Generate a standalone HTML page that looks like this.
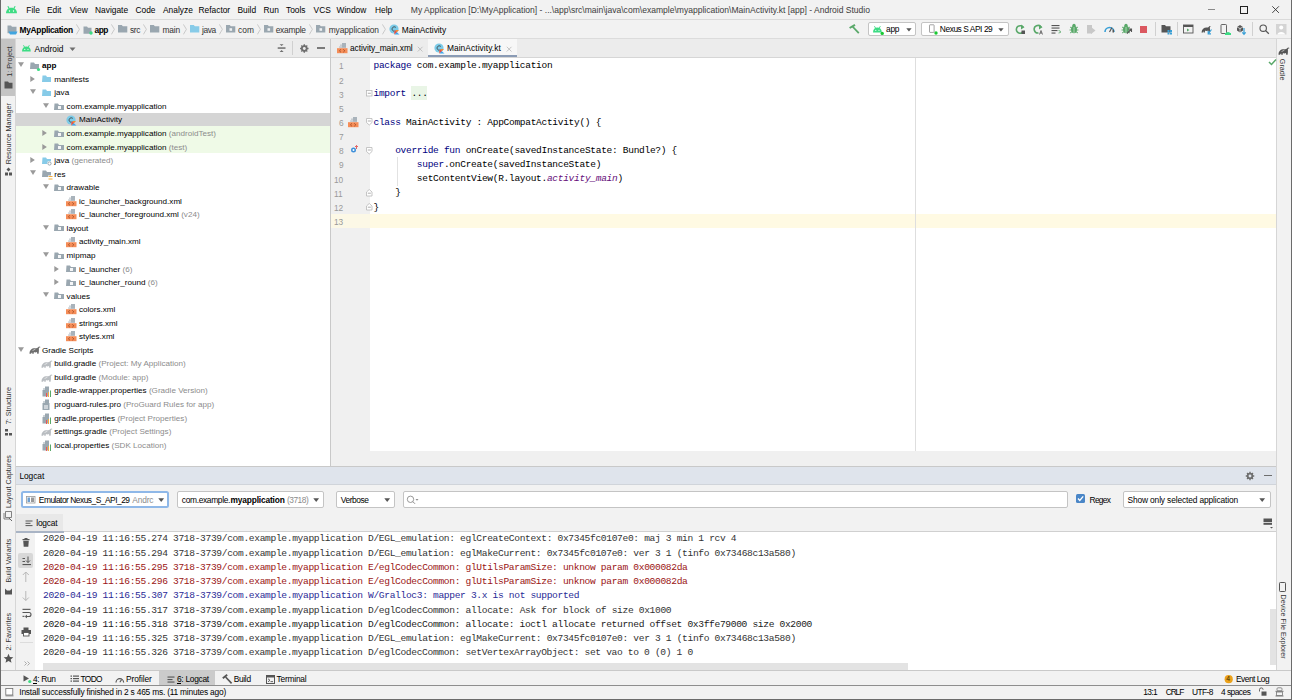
<!DOCTYPE html>
<html><head><meta charset="utf-8"><style>
html,body{margin:0;padding:0;width:1292px;height:700px;overflow:hidden;background:#f2f2f2;}
body{position:relative;font-family:"Liberation Sans", sans-serif;}
body>div,body>svg{position:absolute;}
.t{line-height:0;white-space:pre;}
</style></head><body>
<div style="left:0px;top:0px;width:1292px;height:19px;background:#f2f2f2;"></div>
<div style="left:0px;top:19px;width:1292px;height:1px;background:#dadada;"></div>
<div style="left:0px;top:20px;width:1292px;height:18px;background:#f2f2f2;"></div>
<div style="left:0px;top:38px;width:1292px;height:1px;background:#dcdcdc;"></div>
<div style="left:1px;top:39px;width:14px;height:632px;background:#f2f2f2;"></div>
<div style="left:15px;top:39px;width:1px;height:632px;background:#d6d6d6;"></div>
<div style="left:1px;top:39px;width:14px;height:57px;background:#c4c4c4;"></div>
<div style="left:16px;top:39px;width:314px;height:18px;background:#ececec;"></div>
<div style="left:16px;top:57px;width:314px;height:1px;background:#d6d6d6;"></div>
<div style="left:16px;top:58px;width:314px;height:408px;background:#ffffff;"></div>
<div style="left:16px;top:112.5px;width:314px;height:13.5px;background:#d5d5d5;"></div>
<div style="left:16px;top:126px;width:314px;height:27px;background:#effae7;"></div>
<div style="left:330px;top:39px;width:1px;height:427px;background:#c9c9c9;"></div>
<div style="left:331px;top:39px;width:945px;height:18px;background:#ececec;"></div>
<div style="left:331px;top:57px;width:945px;height:1px;background:#d6d6d6;"></div>
<div style="left:428px;top:39px;width:89px;height:18px;background:#f7f7f7;"></div>
<div style="left:428px;top:55px;width:89px;height:2px;background:#8a9bb5;"></div>
<div style="left:331px;top:58px;width:39px;height:393px;background:#f0f0f0;"></div>
<div style="left:370px;top:58px;width:906px;height:393px;background:#ffffff;"></div>
<div style="left:331px;top:214px;width:945px;height:14.2px;background:#fcf8e6;"></div>
<div style="left:370px;top:214px;width:906px;height:14.2px;background:#fffae3;"></div>
<div style="left:915px;top:58px;width:1px;height:393px;background:#dedede;"></div>
<div style="left:331px;top:451px;width:945px;height:15px;background:#f0f0f0;"></div>
<div style="left:1276px;top:39px;width:1px;height:632px;background:#d6d6d6;"></div>
<div style="left:1277px;top:39px;width:14px;height:632px;background:#f2f2f2;"></div>
<div style="left:16px;top:466px;width:1260px;height:1px;background:#c9c9c9;"></div>
<div style="left:16px;top:467px;width:1260px;height:17px;background:#dfe4ec;"></div>
<div style="left:16px;top:484px;width:1260px;height:1px;background:#d0d4da;"></div>
<div style="left:16px;top:485px;width:1260px;height:28px;background:#f2f2f2;"></div>
<div style="left:16px;top:514px;width:1260px;height:17px;background:#f2f2f2;"></div>
<div style="left:16px;top:531px;width:1260px;height:1px;background:#d0d0d0;"></div>
<div style="left:16px;top:532px;width:19px;height:138px;background:#f2f2f2;"></div>
<div style="left:35px;top:532px;width:1241px;height:138px;background:#ffffff;"></div>
<div style="left:0px;top:670px;width:1292px;height:1px;background:#c9c9c9;"></div>
<div style="left:1px;top:671px;width:1290px;height:14px;background:#f2f2f2;"></div>
<div style="left:0px;top:685px;width:1292px;height:1px;background:#8e8e8e;"></div>
<div style="left:1px;top:686px;width:1290px;height:13px;background:#f2f2f2;"></div>
<div style="left:0px;top:0px;width:1px;height:700px;background:#6b6b6b;"></div>
<div style="left:1291px;top:0px;width:1px;height:700px;background:#6b6b6b;"></div>
<div style="left:0px;top:699px;width:1292px;height:1px;background:#6b6b6b;"></div>
<div class="t" style="left:26.3px;top:9.79px;font-size:8.4px;color:#000;font-weight:normal;font-family:'Liberation Sans', sans-serif;">File</div>
<div class="t" style="left:47px;top:9.79px;font-size:8.4px;color:#000;font-weight:normal;font-family:'Liberation Sans', sans-serif;">Edit</div>
<div class="t" style="left:69.7px;top:9.79px;font-size:8.4px;color:#000;font-weight:normal;font-family:'Liberation Sans', sans-serif;">View</div>
<div class="t" style="left:95px;top:9.79px;font-size:8.4px;color:#000;font-weight:normal;font-family:'Liberation Sans', sans-serif;">Navigate</div>
<div class="t" style="left:135.5px;top:9.79px;font-size:8.4px;color:#000;font-weight:normal;font-family:'Liberation Sans', sans-serif;">Code</div>
<div class="t" style="left:163px;top:9.79px;font-size:8.4px;color:#000;font-weight:normal;font-family:'Liberation Sans', sans-serif;">Analyze</div>
<div class="t" style="left:198.5px;top:9.79px;font-size:8.4px;color:#000;font-weight:normal;font-family:'Liberation Sans', sans-serif;">Refactor</div>
<div class="t" style="left:237.5px;top:9.79px;font-size:8.4px;color:#000;font-weight:normal;font-family:'Liberation Sans', sans-serif;">Build</div>
<div class="t" style="left:263.5px;top:9.79px;font-size:8.4px;color:#000;font-weight:normal;font-family:'Liberation Sans', sans-serif;">Run</div>
<div class="t" style="left:286px;top:9.79px;font-size:8.4px;color:#000;font-weight:normal;font-family:'Liberation Sans', sans-serif;">Tools</div>
<div class="t" style="left:313.6px;top:9.79px;font-size:8.4px;color:#000;font-weight:normal;font-family:'Liberation Sans', sans-serif;">VCS</div>
<div class="t" style="left:336.5px;top:9.79px;font-size:8.4px;color:#000;font-weight:normal;font-family:'Liberation Sans', sans-serif;">Window</div>
<div class="t" style="left:375px;top:9.79px;font-size:8.4px;color:#000;font-weight:normal;font-family:'Liberation Sans', sans-serif;">Help</div>
<div class="t" style="left:410.8px;top:9.74px;font-size:8.55px;color:#3c3c3c;font-weight:normal;font-family:'Liberation Sans', sans-serif;">My Application [D:\MyApplication] - ...\app\src\main\java\com\example\myapplication\MainActivity.kt [app] - Android Studio</div>
<div class="t" style="left:339.0px;top:66.42px;font-size:8.3px;color:#999999;font-weight:normal;font-family:'Liberation Sans', sans-serif;">1</div>
<div class="t" style="left:339.0px;top:80.57px;font-size:8.3px;color:#999999;font-weight:normal;font-family:'Liberation Sans', sans-serif;">2</div>
<div class="t" style="left:339.0px;top:94.72px;font-size:8.3px;color:#999999;font-weight:normal;font-family:'Liberation Sans', sans-serif;">3</div>
<div class="t" style="left:339.0px;top:108.87px;font-size:8.3px;color:#999999;font-weight:normal;font-family:'Liberation Sans', sans-serif;">5</div>
<div class="t" style="left:339.0px;top:123.02px;font-size:8.3px;color:#999999;font-weight:normal;font-family:'Liberation Sans', sans-serif;">6</div>
<div class="t" style="left:339.0px;top:137.17px;font-size:8.3px;color:#999999;font-weight:normal;font-family:'Liberation Sans', sans-serif;">7</div>
<div class="t" style="left:339.0px;top:151.32px;font-size:8.3px;color:#999999;font-weight:normal;font-family:'Liberation Sans', sans-serif;">8</div>
<div class="t" style="left:339.0px;top:165.47px;font-size:8.3px;color:#999999;font-weight:normal;font-family:'Liberation Sans', sans-serif;">9</div>
<div class="t" style="left:334.0px;top:179.62px;font-size:8.3px;color:#999999;font-weight:normal;font-family:'Liberation Sans', sans-serif;">10</div>
<div class="t" style="left:334.0px;top:193.77px;font-size:8.3px;color:#999999;font-weight:normal;font-family:'Liberation Sans', sans-serif;">11</div>
<div class="t" style="left:334.0px;top:207.92px;font-size:8.3px;color:#999999;font-weight:normal;font-family:'Liberation Sans', sans-serif;">12</div>
<div class="t" style="left:334.0px;top:222.07px;font-size:8.3px;color:#999999;font-weight:normal;font-family:'Liberation Sans', sans-serif;">13</div>
<div class="t" style="left:373.5px;top:66.01px;font-size:9.5px;color:#000080;font-weight:normal;font-family:'Liberation Mono', monospace;letter-spacing:-0.281px;">package</div>
<div class="t" style="left:411.44px;top:66.01px;font-size:9.5px;color:#000;font-weight:normal;font-family:'Liberation Mono', monospace;letter-spacing:-0.281px;"> com.example.myapplication</div>
<div style="left:411px;top:86px;width:16px;height:14px;background:#e9f5e6;"></div>
<div class="t" style="left:373.5px;top:94.31px;font-size:9.5px;color:#000080;font-weight:normal;font-family:'Liberation Mono', monospace;letter-spacing:-0.281px;">import</div>
<div class="t" style="left:406.02px;top:94.31px;font-size:9.5px;color:#000;font-weight:normal;font-family:'Liberation Mono', monospace;letter-spacing:-0.281px;"> ...</div>
<div class="t" style="left:373.5px;top:122.61px;font-size:9.5px;color:#000080;font-weight:normal;font-family:'Liberation Mono', monospace;letter-spacing:-0.281px;">class</div>
<div class="t" style="left:400.6px;top:122.61px;font-size:9.5px;color:#000;font-weight:normal;font-family:'Liberation Mono', monospace;letter-spacing:-0.281px;"> MainActivity : AppCompatActivity() {</div>
<div class="t" style="left:395.18px;top:150.91px;font-size:9.5px;color:#000080;font-weight:normal;font-family:'Liberation Mono', monospace;letter-spacing:-0.281px;">override</div>
<div class="t" style="left:443.96000000000004px;top:150.91px;font-size:9.5px;color:#000080;font-weight:normal;font-family:'Liberation Mono', monospace;letter-spacing:-0.281px;">fun</div>
<div class="t" style="left:460.22px;top:150.91px;font-size:9.5px;color:#000;font-weight:normal;font-family:'Liberation Mono', monospace;letter-spacing:-0.281px;"> onCreate(savedInstanceState: Bundle?) {</div>
<div class="t" style="left:416.86px;top:165.06px;font-size:9.5px;color:#000080;font-weight:normal;font-family:'Liberation Mono', monospace;letter-spacing:-0.281px;">super</div>
<div class="t" style="left:443.96000000000004px;top:165.06px;font-size:9.5px;color:#000;font-weight:normal;font-family:'Liberation Mono', monospace;letter-spacing:-0.281px;">.onCreate(savedInstanceState)</div>
<div class="t" style="left:373.5px;top:179.21px;font-size:9.5px;color:#000;font-weight:normal;font-family:'Liberation Mono', monospace;letter-spacing:-0.281px;">        setContentView(R.layout.</div>
<div class="t" style="left:546.94px;top:179.21px;font-size:9.5px;color:#660e7a;font-weight:normal;font-family:'Liberation Mono', monospace;letter-spacing:-0.281px;font-style:italic;">activity_main</div>
<div class="t" style="left:617.4000000000001px;top:179.21px;font-size:9.5px;color:#000;font-weight:normal;font-family:'Liberation Mono', monospace;">)</div>
<div class="t" style="left:373.5px;top:193.36px;font-size:9.5px;color:#000;font-weight:normal;font-family:'Liberation Mono', monospace;letter-spacing:-0.281px;">    }</div>
<div class="t" style="left:373.5px;top:207.51px;font-size:9.5px;color:#000;font-weight:normal;font-family:'Liberation Mono', monospace;">}</div>
<svg style="left:18.0px;top:62.08px" width="7" height="6" viewBox="0 0 7 6"><path d="M0,0.3 h6 l-3,4.6 z" fill="#9a9a9a"/></svg>
<svg style="left:29.5px;top:61.879999999999995px" width="12" height="10" viewBox="0 0 12 10"><path d="M0.5,0.5 h3.5 l1,1.5 h4 v5 h-9 z" fill="#9aa7b0"/><circle cx="8.5" cy="7.5" r="1.6" fill="#3ddc84"/></svg>
<div class="t" style="left:42.0px;top:66.27px;font-size:8.1px;color:#000;font-weight:bold;font-family:'Liberation Sans', sans-serif;">app</div>
<svg style="left:29.8px;top:75.83px" width="6" height="7" viewBox="0 0 6 7"><path d="M0.3,0 v6 l4.6,-3 z" fill="#9a9a9a"/></svg>
<svg style="left:41.8px;top:75.42999999999999px" width="12" height="10" viewBox="0 0 12 10"><path d="M0.5,0.5 h3.5 l1,1.5 h4 v5 h-9 z" fill="#87cbe8"/></svg>
<div class="t" style="left:54.3px;top:79.82px;font-size:8.1px;color:#000;font-weight:normal;font-family:'Liberation Sans', sans-serif;">manifests</div>
<svg style="left:30.3px;top:89.17999999999999px" width="7" height="6" viewBox="0 0 7 6"><path d="M0,0.3 h6 l-3,4.6 z" fill="#9a9a9a"/></svg>
<svg style="left:41.8px;top:88.97999999999999px" width="12" height="10" viewBox="0 0 12 10"><path d="M0.5,0.5 h3.5 l1,1.5 h4 v5 h-9 z" fill="#87cbe8"/></svg>
<div class="t" style="left:54.3px;top:93.37px;font-size:8.1px;color:#000;font-weight:normal;font-family:'Liberation Sans', sans-serif;">java</div>
<svg style="left:42.6px;top:102.73px" width="7" height="6" viewBox="0 0 7 6"><path d="M0,0.3 h6 l-3,4.6 z" fill="#9a9a9a"/></svg>
<svg style="left:54.1px;top:102.53px" width="13" height="10" viewBox="0 0 13 10"><path d="M0.5,0.5 h3.5 l1,1.5 h5 v5 h-10 z" fill="#9aa7b0"/><rect x="4" y="3" width="3" height="3" fill="#fff" opacity="0.9"/></svg>
<div class="t" style="left:66.6px;top:106.92px;font-size:8.1px;color:#000;font-weight:normal;font-family:'Liberation Sans', sans-serif;">com.example.myapplication</div>
<svg style="left:65.9px;top:115.08px" width="11" height="11" viewBox="0 0 11 11"><circle cx="5" cy="5" r="4.6" fill="#7ccbe8"/><path d="M6.8,3.4 A2.2,2.2 0 1 0 5.6,7.2" stroke="#333" stroke-width="1" fill="none" opacity="0.8"/><path d="M5.5,10.5 L5.5,6 L10,6 Z" fill="#f88a2f"/><path d="M5.5,10.5 L5.5,6 L7.8,8.2 Z" fill="#e44857"/><path d="M5.5,10.5 L7.8,8.2 L10.5,10.5 Z" fill="#3aa8f0"/><path d="M5.5,6 L6.8,6 L5.5,7.5 Z" fill="#3aa8f0"/></svg>
<div class="t" style="left:78.9px;top:120.47px;font-size:8.1px;color:#000;font-weight:normal;font-family:'Liberation Sans', sans-serif;">MainActivity</div>
<svg style="left:42.1px;top:130.03px" width="6" height="7" viewBox="0 0 6 7"><path d="M0.3,0 v6 l4.6,-3 z" fill="#9a9a9a"/></svg>
<svg style="left:54.1px;top:129.63px" width="13" height="10" viewBox="0 0 13 10"><path d="M0.5,0.5 h3.5 l1,1.5 h5 v5 h-10 z" fill="#9aa7b0"/><rect x="4" y="3" width="3" height="3" fill="#fff" opacity="0.9"/></svg>
<div class="t" style="left:66.6px;top:134.02px;font-size:8.1px;color:#000;font-weight:normal;font-family:'Liberation Sans', sans-serif;">com.example.myapplication</div>
<div class="t" style="left:168.83881250000002px;top:134.02px;font-size:8.1px;color:#8c8c8c;font-weight:normal;font-family:'Liberation Sans', sans-serif;">(androidTest)</div>
<svg style="left:42.1px;top:143.58px" width="6" height="7" viewBox="0 0 6 7"><path d="M0.3,0 v6 l4.6,-3 z" fill="#9a9a9a"/></svg>
<svg style="left:54.1px;top:143.18px" width="13" height="10" viewBox="0 0 13 10"><path d="M0.5,0.5 h3.5 l1,1.5 h5 v5 h-10 z" fill="#9aa7b0"/><rect x="4" y="3" width="3" height="3" fill="#fff" opacity="0.9"/></svg>
<div class="t" style="left:66.6px;top:147.57px;font-size:8.1px;color:#000;font-weight:normal;font-family:'Liberation Sans', sans-serif;">com.example.myapplication</div>
<div class="t" style="left:168.83881250000002px;top:147.57px;font-size:8.1px;color:#8c8c8c;font-weight:normal;font-family:'Liberation Sans', sans-serif;">(test)</div>
<svg style="left:29.8px;top:157.13000000000002px" width="6" height="7" viewBox="0 0 6 7"><path d="M0.3,0 v6 l4.6,-3 z" fill="#9a9a9a"/></svg>
<svg style="left:41.8px;top:156.73000000000002px" width="12" height="10" viewBox="0 0 12 10"><path d="M0.5,0.5 h3.5 l1,1.5 h4 v5 h-9 z" fill="#87cbe8"/><circle cx="7.5" cy="6.5" r="2.4" fill="#fff"/><circle cx="7.5" cy="6.5" r="1.6" fill="none" stroke="#9aa7b0" stroke-width="1"/></svg>
<div class="t" style="left:54.3px;top:161.12px;font-size:8.1px;color:#000;font-weight:normal;font-family:'Liberation Sans', sans-serif;">java</div>
<div class="t" style="left:71.45843749999999px;top:161.12px;font-size:8.1px;color:#8c8c8c;font-weight:normal;font-family:'Liberation Sans', sans-serif;">(generated)</div>
<svg style="left:30.3px;top:170.48000000000002px" width="7" height="6" viewBox="0 0 7 6"><path d="M0,0.3 h6 l-3,4.6 z" fill="#9a9a9a"/></svg>
<svg style="left:41.8px;top:170.28px" width="12" height="10" viewBox="0 0 12 10"><path d="M0.5,0.5 h3.5 l1,1.5 h4 v5 h-9 z" fill="#9aa7b0"/><rect x="6" y="5.5" width="5" height="4.5" fill="#fff"/><rect x="6.5" y="6" width="4" height="1" fill="#f4af3d"/><rect x="6.5" y="8.5" width="4" height="1" fill="#f4af3d"/></svg>
<div class="t" style="left:54.3px;top:174.67px;font-size:8.1px;color:#000;font-weight:normal;font-family:'Liberation Sans', sans-serif;">res</div>
<svg style="left:42.6px;top:184.03px" width="7" height="6" viewBox="0 0 7 6"><path d="M0,0.3 h6 l-3,4.6 z" fill="#9a9a9a"/></svg>
<svg style="left:54.1px;top:183.82999999999998px" width="13" height="10" viewBox="0 0 13 10"><path d="M0.5,0.5 h3.5 l1,1.5 h5 v5 h-10 z" fill="#9aa7b0"/><rect x="4" y="3" width="3" height="3" fill="#fff" opacity="0.9"/></svg>
<div class="t" style="left:66.6px;top:188.22px;font-size:8.1px;color:#000;font-weight:normal;font-family:'Liberation Sans', sans-serif;">drawable</div>
<svg style="left:65.9px;top:195.88px" width="11" height="11" viewBox="0 0 11 11"><rect x="5" y="0" width="4" height="4.6" fill="#a9b3bb"/><rect x="3.2" y="1.6" width="1.6" height="1.1" fill="#a9b3bb"/><rect x="2.2" y="3.5" width="6.8" height="1.1" fill="#a9b3bb"/><rect x="0" y="5.2" width="10.5" height="5" fill="#f58d58"/><path d="M4,6.3 l-1.6,1.5 l1.6,1.5 M6.2,6.3 l1.6,1.5 l-1.6,1.5" stroke="#8a3a18" stroke-width="0.75" fill="none" opacity="0.85"/></svg>
<div class="t" style="left:78.9px;top:201.77px;font-size:8.1px;color:#000;font-weight:normal;font-family:'Liberation Sans', sans-serif;">ic_launcher_background.xml</div>
<svg style="left:65.9px;top:209.43px" width="11" height="11" viewBox="0 0 11 11"><rect x="5" y="0" width="4" height="4.6" fill="#a9b3bb"/><rect x="3.2" y="1.6" width="1.6" height="1.1" fill="#a9b3bb"/><rect x="2.2" y="3.5" width="6.8" height="1.1" fill="#a9b3bb"/><rect x="0" y="5.2" width="10.5" height="5" fill="#f58d58"/><path d="M4,6.3 l-1.6,1.5 l1.6,1.5 M6.2,6.3 l1.6,1.5 l-1.6,1.5" stroke="#8a3a18" stroke-width="0.75" fill="none" opacity="0.85"/></svg>
<div class="t" style="left:78.9px;top:215.32px;font-size:8.1px;color:#000;font-weight:normal;font-family:'Liberation Sans', sans-serif;">ic_launcher_foreground.xml</div>
<div class="t" style="left:181.14893750000002px;top:215.32px;font-size:8.1px;color:#8c8c8c;font-weight:normal;font-family:'Liberation Sans', sans-serif;">(v24)</div>
<svg style="left:42.6px;top:224.68000000000004px" width="7" height="6" viewBox="0 0 7 6"><path d="M0,0.3 h6 l-3,4.6 z" fill="#9a9a9a"/></svg>
<svg style="left:54.1px;top:224.48000000000002px" width="13" height="10" viewBox="0 0 13 10"><path d="M0.5,0.5 h3.5 l1,1.5 h5 v5 h-10 z" fill="#9aa7b0"/><rect x="4" y="3" width="3" height="3" fill="#fff" opacity="0.9"/></svg>
<div class="t" style="left:66.6px;top:228.87px;font-size:8.1px;color:#000;font-weight:normal;font-family:'Liberation Sans', sans-serif;">layout</div>
<svg style="left:65.9px;top:236.53px" width="11" height="11" viewBox="0 0 11 11"><rect x="5" y="0" width="4" height="4.6" fill="#a9b3bb"/><rect x="3.2" y="1.6" width="1.6" height="1.1" fill="#a9b3bb"/><rect x="2.2" y="3.5" width="6.8" height="1.1" fill="#a9b3bb"/><rect x="0" y="5.2" width="10.5" height="5" fill="#f58d58"/><path d="M4,6.3 l-1.6,1.5 l1.6,1.5 M6.2,6.3 l1.6,1.5 l-1.6,1.5" stroke="#8a3a18" stroke-width="0.75" fill="none" opacity="0.85"/></svg>
<div class="t" style="left:78.9px;top:242.42px;font-size:8.1px;color:#000;font-weight:normal;font-family:'Liberation Sans', sans-serif;">activity_main.xml</div>
<svg style="left:42.6px;top:251.78000000000003px" width="7" height="6" viewBox="0 0 7 6"><path d="M0,0.3 h6 l-3,4.6 z" fill="#9a9a9a"/></svg>
<svg style="left:54.1px;top:251.58px" width="13" height="10" viewBox="0 0 13 10"><path d="M0.5,0.5 h3.5 l1,1.5 h5 v5 h-10 z" fill="#9aa7b0"/><rect x="4" y="3" width="3" height="3" fill="#fff" opacity="0.9"/></svg>
<div class="t" style="left:66.6px;top:255.97px;font-size:8.1px;color:#000;font-weight:normal;font-family:'Liberation Sans', sans-serif;">mipmap</div>
<svg style="left:54.400000000000006px;top:265.53px" width="6" height="7" viewBox="0 0 6 7"><path d="M0.3,0 v6 l4.6,-3 z" fill="#9a9a9a"/></svg>
<svg style="left:66.4px;top:265.13px" width="13" height="10" viewBox="0 0 13 10"><path d="M0.5,0.5 h3.5 l1,1.5 h5 v5 h-10 z" fill="#9aa7b0"/><rect x="4" y="3" width="3" height="3" fill="#fff" opacity="0.9"/></svg>
<div class="t" style="left:78.9px;top:269.52px;font-size:8.1px;color:#000;font-weight:normal;font-family:'Liberation Sans', sans-serif;">ic_launcher</div>
<div class="t" style="left:122.62264062499999px;top:269.52px;font-size:8.1px;color:#8c8c8c;font-weight:normal;font-family:'Liberation Sans', sans-serif;">(6)</div>
<svg style="left:54.400000000000006px;top:279.08px" width="6" height="7" viewBox="0 0 6 7"><path d="M0.3,0 v6 l4.6,-3 z" fill="#9a9a9a"/></svg>
<svg style="left:66.4px;top:278.68px" width="13" height="10" viewBox="0 0 13 10"><path d="M0.5,0.5 h3.5 l1,1.5 h5 v5 h-10 z" fill="#9aa7b0"/><rect x="4" y="3" width="3" height="3" fill="#fff" opacity="0.9"/></svg>
<div class="t" style="left:78.9px;top:283.07px;font-size:8.1px;color:#000;font-weight:normal;font-family:'Liberation Sans', sans-serif;">ic_launcher_round</div>
<div class="t" style="left:147.84148437500002px;top:283.07px;font-size:8.1px;color:#8c8c8c;font-weight:normal;font-family:'Liberation Sans', sans-serif;">(6)</div>
<svg style="left:42.6px;top:292.43px" width="7" height="6" viewBox="0 0 7 6"><path d="M0,0.3 h6 l-3,4.6 z" fill="#9a9a9a"/></svg>
<svg style="left:54.1px;top:292.23px" width="13" height="10" viewBox="0 0 13 10"><path d="M0.5,0.5 h3.5 l1,1.5 h5 v5 h-10 z" fill="#9aa7b0"/><rect x="4" y="3" width="3" height="3" fill="#fff" opacity="0.9"/></svg>
<div class="t" style="left:66.6px;top:296.62px;font-size:8.1px;color:#000;font-weight:normal;font-family:'Liberation Sans', sans-serif;">values</div>
<svg style="left:65.9px;top:304.28px" width="11" height="11" viewBox="0 0 11 11"><rect x="5" y="0" width="4" height="4.6" fill="#a9b3bb"/><rect x="3.2" y="1.6" width="1.6" height="1.1" fill="#a9b3bb"/><rect x="2.2" y="3.5" width="6.8" height="1.1" fill="#a9b3bb"/><rect x="0" y="5.2" width="10.5" height="5" fill="#f58d58"/><path d="M4,6.3 l-1.6,1.5 l1.6,1.5 M6.2,6.3 l1.6,1.5 l-1.6,1.5" stroke="#8a3a18" stroke-width="0.75" fill="none" opacity="0.85"/></svg>
<div class="t" style="left:78.9px;top:310.17px;font-size:8.1px;color:#000;font-weight:normal;font-family:'Liberation Sans', sans-serif;">colors.xml</div>
<svg style="left:65.9px;top:317.83px" width="11" height="11" viewBox="0 0 11 11"><rect x="5" y="0" width="4" height="4.6" fill="#a9b3bb"/><rect x="3.2" y="1.6" width="1.6" height="1.1" fill="#a9b3bb"/><rect x="2.2" y="3.5" width="6.8" height="1.1" fill="#a9b3bb"/><rect x="0" y="5.2" width="10.5" height="5" fill="#f58d58"/><path d="M4,6.3 l-1.6,1.5 l1.6,1.5 M6.2,6.3 l1.6,1.5 l-1.6,1.5" stroke="#8a3a18" stroke-width="0.75" fill="none" opacity="0.85"/></svg>
<div class="t" style="left:78.9px;top:323.72px;font-size:8.1px;color:#000;font-weight:normal;font-family:'Liberation Sans', sans-serif;">strings.xml</div>
<svg style="left:65.9px;top:331.38px" width="11" height="11" viewBox="0 0 11 11"><rect x="5" y="0" width="4" height="4.6" fill="#a9b3bb"/><rect x="3.2" y="1.6" width="1.6" height="1.1" fill="#a9b3bb"/><rect x="2.2" y="3.5" width="6.8" height="1.1" fill="#a9b3bb"/><rect x="0" y="5.2" width="10.5" height="5" fill="#f58d58"/><path d="M4,6.3 l-1.6,1.5 l1.6,1.5 M6.2,6.3 l1.6,1.5 l-1.6,1.5" stroke="#8a3a18" stroke-width="0.75" fill="none" opacity="0.85"/></svg>
<div class="t" style="left:78.9px;top:337.27px;font-size:8.1px;color:#000;font-weight:normal;font-family:'Liberation Sans', sans-serif;">styles.xml</div>
<svg style="left:18.0px;top:346.63px" width="7" height="6" viewBox="0 0 7 6"><path d="M0,0.3 h6 l-3,4.6 z" fill="#9a9a9a"/></svg>
<svg style="left:29.0px;top:345.43px" width="12" height="10" viewBox="0 0 12 10"><path d="M0.5,8.8 C0.5,5 2.6,3.2 5.6,3.2 C7.4,3.2 8.3,3.3 9.1,2.2 C9.7,1.4 10.9,1.2 11.5,2.1 L10.8,2.7 C10.4,2.3 9.9,2.6 9.9,3.3 C9.9,4.8 10.1,6.3 9.6,8.8 L8.2,8.8 L8,7.1 C7.1,7.5 5.8,7.5 4.9,7.1 L4.7,8.8 L3.3,8.8 L3.1,7.2 L2,8.8 Z" fill="#6e6e6e"/><path d="M3.5,5.6 L6.4,4.2" stroke="#fff" stroke-width="0.7" opacity="0.8"/></svg>
<div class="t" style="left:42.0px;top:350.82px;font-size:8.1px;color:#000;font-weight:normal;font-family:'Liberation Sans', sans-serif;">Gradle Scripts</div>
<svg style="left:41.3px;top:358.98px" width="12" height="10" viewBox="0 0 12 10"><path d="M0.5,8.8 C0.5,5 2.6,3.2 5.6,3.2 C7.4,3.2 8.3,3.3 9.1,2.2 C9.7,1.4 10.9,1.2 11.5,2.1 L10.8,2.7 C10.4,2.3 9.9,2.6 9.9,3.3 C9.9,4.8 10.1,6.3 9.6,8.8 L8.2,8.8 L8,7.1 C7.1,7.5 5.8,7.5 4.9,7.1 L4.7,8.8 L3.3,8.8 L3.1,7.2 L2,8.8 Z" fill="#b9bdc1"/><path d="M3.5,5.6 L6.4,4.2" stroke="#fff" stroke-width="0.7" opacity="0.8"/></svg>
<div class="t" style="left:54.3px;top:364.37px;font-size:8.1px;color:#000;font-weight:normal;font-family:'Liberation Sans', sans-serif;">build.gradle</div>
<div class="t" style="left:98.47699999999999px;top:364.37px;font-size:8.1px;color:#8c8c8c;font-weight:normal;font-family:'Liberation Sans', sans-serif;">(Project: My Application)</div>
<svg style="left:41.3px;top:372.53000000000003px" width="12" height="10" viewBox="0 0 12 10"><path d="M0.5,8.8 C0.5,5 2.6,3.2 5.6,3.2 C7.4,3.2 8.3,3.3 9.1,2.2 C9.7,1.4 10.9,1.2 11.5,2.1 L10.8,2.7 C10.4,2.3 9.9,2.6 9.9,3.3 C9.9,4.8 10.1,6.3 9.6,8.8 L8.2,8.8 L8,7.1 C7.1,7.5 5.8,7.5 4.9,7.1 L4.7,8.8 L3.3,8.8 L3.1,7.2 L2,8.8 Z" fill="#b9bdc1"/><path d="M3.5,5.6 L6.4,4.2" stroke="#fff" stroke-width="0.7" opacity="0.8"/></svg>
<div class="t" style="left:54.3px;top:377.92px;font-size:8.1px;color:#000;font-weight:normal;font-family:'Liberation Sans', sans-serif;">build.gradle</div>
<div class="t" style="left:98.47699999999999px;top:377.92px;font-size:8.1px;color:#8c8c8c;font-weight:normal;font-family:'Liberation Sans', sans-serif;">(Module: app)</div>
<svg style="left:41.8px;top:385.58000000000004px" width="10" height="12" viewBox="0 0 10 12"><rect x="3" y="0.5" width="4" height="5" fill="#9aa7b0"/><rect x="1" y="2.5" width="2" height="1" fill="#9aa7b0"/><rect x="0.5" y="4" width="6.5" height="6.5" fill="#9aa7b0"/><rect x="4" y="7" width="1" height="4" fill="#e55"/><rect x="6" y="6" width="1" height="5" fill="#f4af3d"/><rect x="8" y="4.5" width="1" height="6.5" fill="#59a869"/></svg>
<div class="t" style="left:54.3px;top:391.47px;font-size:8.1px;color:#000;font-weight:normal;font-family:'Liberation Sans', sans-serif;">gradle-wrapper.properties</div>
<div class="t" style="left:148.89190625px;top:391.47px;font-size:8.1px;color:#8c8c8c;font-weight:normal;font-family:'Liberation Sans', sans-serif;">(Gradle Version)</div>
<svg style="left:41.8px;top:399.13px" width="10" height="12" viewBox="0 0 10 12"><rect x="3" y="0.5" width="4" height="5" fill="#9aa7b0"/><rect x="1" y="2.5" width="2" height="1" fill="#9aa7b0"/><rect x="0.5" y="4" width="7" height="7" fill="#9aa7b0"/><rect x="2" y="6.5" width="4" height="1" fill="#fff"/><rect x="2" y="8.5" width="4" height="1" fill="#fff"/></svg>
<div class="t" style="left:54.3px;top:405.02px;font-size:8.1px;color:#000;font-weight:normal;font-family:'Liberation Sans', sans-serif;">proguard-rules.pro</div>
<div class="t" style="left:123.22882812499999px;top:405.02px;font-size:8.1px;color:#8c8c8c;font-weight:normal;font-family:'Liberation Sans', sans-serif;">(ProGuard Rules for app)</div>
<svg style="left:41.8px;top:412.68px" width="10" height="12" viewBox="0 0 10 12"><rect x="3" y="0.5" width="4" height="5" fill="#9aa7b0"/><rect x="1" y="2.5" width="2" height="1" fill="#9aa7b0"/><rect x="0.5" y="4" width="6.5" height="6.5" fill="#9aa7b0"/><rect x="4" y="7" width="1" height="4" fill="#e55"/><rect x="6" y="6" width="1" height="5" fill="#f4af3d"/><rect x="8" y="4.5" width="1" height="6.5" fill="#59a869"/></svg>
<div class="t" style="left:54.3px;top:418.57px;font-size:8.1px;color:#000;font-weight:normal;font-family:'Liberation Sans', sans-serif;">gradle.properties</div>
<div class="t" style="left:117.38037499999999px;top:418.57px;font-size:8.1px;color:#8c8c8c;font-weight:normal;font-family:'Liberation Sans', sans-serif;">(Project Properties)</div>
<svg style="left:41.3px;top:426.73px" width="12" height="10" viewBox="0 0 12 10"><path d="M0.5,8.8 C0.5,5 2.6,3.2 5.6,3.2 C7.4,3.2 8.3,3.3 9.1,2.2 C9.7,1.4 10.9,1.2 11.5,2.1 L10.8,2.7 C10.4,2.3 9.9,2.6 9.9,3.3 C9.9,4.8 10.1,6.3 9.6,8.8 L8.2,8.8 L8,7.1 C7.1,7.5 5.8,7.5 4.9,7.1 L4.7,8.8 L3.3,8.8 L3.1,7.2 L2,8.8 Z" fill="#b9bdc1"/><path d="M3.5,5.6 L6.4,4.2" stroke="#fff" stroke-width="0.7" opacity="0.8"/></svg>
<div class="t" style="left:54.3px;top:432.12px;font-size:8.1px;color:#000;font-weight:normal;font-family:'Liberation Sans', sans-serif;">settings.gradle</div>
<div class="t" style="left:109.27784375px;top:432.12px;font-size:8.1px;color:#8c8c8c;font-weight:normal;font-family:'Liberation Sans', sans-serif;">(Project Settings)</div>
<svg style="left:41.8px;top:439.78000000000003px" width="10" height="12" viewBox="0 0 10 12"><rect x="3" y="0.5" width="4" height="5" fill="#9aa7b0"/><rect x="1" y="2.5" width="2" height="1" fill="#9aa7b0"/><rect x="0.5" y="4" width="6.5" height="6.5" fill="#9aa7b0"/><rect x="4" y="7" width="1" height="4" fill="#e55"/><rect x="6" y="6" width="1" height="5" fill="#f4af3d"/><rect x="8" y="4.5" width="1" height="6.5" fill="#59a869"/></svg>
<div class="t" style="left:54.3px;top:445.67px;font-size:8.1px;color:#000;font-weight:normal;font-family:'Liberation Sans', sans-serif;">local.properties</div>
<div class="t" style="left:111.524328125px;top:445.67px;font-size:8.1px;color:#8c8c8c;font-weight:normal;font-family:'Liberation Sans', sans-serif;">(SDK Location)</div>
<svg style="left:21.8px;top:44.6px" width="9.8" height="7.6" viewBox="0 0 9.8 7.6"><g transform="scale(0.800,0.880)"><path d="M0,7.3 C0,4 2.4,1.8 5.5,1.8 C8.6,1.8 11,4 11,7.3 Z" fill="#3ddc84"/><path d="M1.8,0.2 L3.3,2.6 M9.2,0.2 L7.7,2.6" stroke="#3ddc84" stroke-width="1.1"/><circle cx="3.5" cy="5" r="0.65" fill="#fff"/><circle cx="7.5" cy="5" r="0.65" fill="#fff"/></g></svg>
<div class="t" style="left:34.6px;top:48.59px;font-size:8.4px;color:#000;font-weight:normal;font-family:'Liberation Sans', sans-serif;">Android</div>
<svg style="left:69px;top:47px" width="7" height="5" viewBox="0 0 7 5"><path d="M0.5,0.5 h6 l-3,3.5 z" fill="#6e6e6e"/></svg>
<svg style="left:276.5px;top:43px" width="10" height="11" viewBox="0 0 10 11"><rect x="0.7" y="4.3" width="7.8" height="1.5" fill="#6e6e6e"/><path d="M2.6,1.2 h4 l-2,1.9 z M2.6,9.0 h4 l-2,-1.9 z" fill="#6e6e6e"/></svg>
<div style="left:292.2px;top:41px;width:1px;height:13.5px;background:#d0d0d0;"></div>
<svg style="left:298.5px;top:42.5px" width="11" height="11" viewBox="0 0 11 11"><polygon points="8.33,4.84 9.54,4.80 9.54,6.20 8.33,6.16 7.90,7.18 8.79,8.01 7.81,8.99 6.98,8.10 5.96,8.53 6.00,9.74 4.60,9.74 4.64,8.53 3.62,8.10 2.79,8.99 1.81,8.01 2.70,7.18 2.27,6.16 1.06,6.20 1.06,4.80 2.27,4.84 2.70,3.82 1.81,2.99 2.79,2.01 3.62,2.90 4.64,2.47 4.60,1.26 6.00,1.26 5.96,2.47 6.98,2.90 7.81,2.01 8.79,2.99 7.90,3.82" fill="#6e6e6e"/><circle cx="5.3" cy="5.5" r="3.16" fill="#6e6e6e"/><circle cx="5.3" cy="5.5" r="1.42" fill="#ececec"/></svg>
<div style="left:317px;top:47.4px;width:8px;height:1.4px;background:#7a7a7a;"></div>
<div style="left:-31.2px;top:22.0px;width:80px;height:80px;display:flex;align-items:center;justify-content:center;"><div style="transform:rotate(-90deg);white-space:nowrap;font-size:7.2px;color:#333;line-height:1;">1: Project</div></div>
<svg style="left:4px;top:80.5px" width="10" height="8" viewBox="0 0 10 8"><path d="M0.5,0.5 h3.5 l1,1.3 h3.5 v5.7 h-8 z" fill="#555"/></svg>
<div style="left:-31.2px;top:94.0px;width:80px;height:80px;display:flex;align-items:center;justify-content:center;"><div style="transform:rotate(-90deg);white-space:nowrap;font-size:7.2px;color:#333;line-height:1;">Resource Manager</div></div>
<svg style="left:4px;top:167px" width="9" height="10" viewBox="0 0 9 10"><path d="M4.5,0.5 l2,2 l-2,2 l-2,-2 z" fill="#555"/><rect x="1" y="5.5" width="3" height="3" fill="#555"/><rect x="5" y="5.5" width="3" height="3" fill="#555"/></svg>
<div style="left:-31.2px;top:366.0px;width:80px;height:80px;display:flex;align-items:center;justify-content:center;"><div style="transform:rotate(-90deg);white-space:nowrap;font-size:7.2px;color:#333;line-height:1;">7: Structure</div></div>
<svg style="left:4px;top:428px" width="9" height="9" viewBox="0 0 9 9"><rect x="1" y="1" width="3" height="2.5" fill="#555"/><rect x="1" y="5" width="3" height="2.5" fill="#555"/><rect x="5" y="5" width="3" height="2.5" fill="#555"/></svg>
<div style="left:-31.2px;top:441.8px;width:80px;height:80px;display:flex;align-items:center;justify-content:center;"><div style="transform:rotate(-90deg);white-space:nowrap;font-size:7.2px;color:#333;line-height:1;">Layout Captures</div></div>
<svg style="left:3px;top:509.5px" width="12" height="12" viewBox="0 0 12 12"><path d="M2.5,1.5 h6 v6 h-6 z M1,3 v6 h6" stroke="#666" stroke-width="0.8" fill="none"/><path d="M6,8 l3,3" stroke="#666" stroke-width="1"/></svg>
<div style="left:-31.2px;top:521.0px;width:80px;height:80px;display:flex;align-items:center;justify-content:center;"><div style="transform:rotate(-90deg);white-space:nowrap;font-size:7.2px;color:#333;line-height:1;">Build Variants</div></div>
<svg style="left:4px;top:588px" width="9" height="7" viewBox="0 0 9 7"><path d="M1,0.5 v6 h7 v-6 l-2,2 h-3 z" fill="#555"/></svg>
<div style="left:-31.2px;top:592.0px;width:80px;height:80px;display:flex;align-items:center;justify-content:center;"><div style="transform:rotate(-90deg);white-space:nowrap;font-size:7.2px;color:#333;line-height:1;">2: Favorites</div></div>
<svg style="left:3px;top:653px" width="11" height="11" viewBox="0 0 11 11"><path d="M5.5,0.8 L6.9,4 L10.3,4.2 L7.7,6.4 L8.5,9.8 L5.5,8 L2.5,9.8 L3.3,6.4 L0.7,4.2 L4.1,4 Z" fill="#555"/></svg>
<div style="left:1243px;top:29.700000000000003px;width:80px;height:80px;display:flex;align-items:center;justify-content:center;"><div style="transform:rotate(90deg);white-space:nowrap;font-size:7.2px;color:#333;line-height:1;">Gradle</div></div>
<svg style="left:1278px;top:45.5px" width="12" height="10" viewBox="0 0 12 10"><path d="M0.5,8.8 C0.5,5 2.6,3.2 5.6,3.2 C7.4,3.2 8.3,3.3 9.1,2.2 C9.7,1.4 10.9,1.2 11.5,2.1 L10.8,2.7 C10.4,2.3 9.9,2.6 9.9,3.3 C9.9,4.8 10.1,6.3 9.6,8.8 L8.2,8.8 L8,7.1 C7.1,7.5 5.8,7.5 4.9,7.1 L4.7,8.8 L3.3,8.8 L3.1,7.2 L2,8.8 Z" fill="#555"/><path d="M3.5,5.6 L6.4,4.2" stroke="#fff" stroke-width="0.7" opacity="0.8"/></svg>
<div style="left:1242.7px;top:586.5px;width:80px;height:80px;display:flex;align-items:center;justify-content:center;"><div style="transform:rotate(90deg);white-space:nowrap;font-size:7.2px;color:#333;line-height:1;">Device File Explorer</div></div>
<svg style="left:1278px;top:582px" width="10" height="11" viewBox="0 0 10 11"><rect x="1.5" y="0.5" width="6" height="9" rx="0.8" fill="none" stroke="#555"/></svg>
<div style="left:1270px;top:608.5px;width:6px;height:56.5px;background:#e3e3e3;"></div>
<svg style="left:7px;top:24.5px" width="12" height="11" viewBox="0 0 12 11"><path d="M0.5,0.5 h3.5 l1,1.3 h4.5 v6.5 h-9 z" fill="#9aa7b0"/><path d="M1.5,6.5 h9 l-1.5,3 h-6 z" fill="#40a5e0"/></svg>
<div class="t" style="left:19.6px;top:29.59px;font-size:8.4px;color:#000;font-weight:bold;font-family:'Liberation Sans', sans-serif;letter-spacing:-0.315px;">MyApplication</div>
<svg style="left:82.5px;top:25.5px" width="11" height="9" viewBox="0 0 11 9"><path d="M0.5,0.5 h3.5 l1,1.3 h3.5 v6 h-8 z" fill="#9aa7b0"/><circle cx="8" cy="7" r="1.7" fill="#3ddc84"/></svg>
<div class="t" style="left:94.6px;top:29.59px;font-size:8.4px;color:#000;font-weight:bold;font-family:'Liberation Sans', sans-serif;letter-spacing:-0.511px;">app</div>
<svg style="left:76px;top:24px" width="5" height="12" viewBox="0 0 5 12"><path d="M0.4,0.4 L3.4,5.3 L0.4,10.4" stroke="#c4c4c4" stroke-width="0.9" fill="none"/></svg>
<svg style="left:111.4px;top:24px" width="5" height="12" viewBox="0 0 5 12"><path d="M0.4,0.4 L3.4,5.3 L0.4,10.4" stroke="#c4c4c4" stroke-width="0.9" fill="none"/></svg>
<svg style="left:143px;top:24px" width="5" height="12" viewBox="0 0 5 12"><path d="M0.4,0.4 L3.4,5.3 L0.4,10.4" stroke="#c4c4c4" stroke-width="0.9" fill="none"/></svg>
<svg style="left:182.9px;top:24px" width="5" height="12" viewBox="0 0 5 12"><path d="M0.4,0.4 L3.4,5.3 L0.4,10.4" stroke="#c4c4c4" stroke-width="0.9" fill="none"/></svg>
<svg style="left:218.6px;top:24px" width="5" height="12" viewBox="0 0 5 12"><path d="M0.4,0.4 L3.4,5.3 L0.4,10.4" stroke="#c4c4c4" stroke-width="0.9" fill="none"/></svg>
<svg style="left:257px;top:24px" width="5" height="12" viewBox="0 0 5 12"><path d="M0.4,0.4 L3.4,5.3 L0.4,10.4" stroke="#c4c4c4" stroke-width="0.9" fill="none"/></svg>
<svg style="left:309px;top:24px" width="5" height="12" viewBox="0 0 5 12"><path d="M0.4,0.4 L3.4,5.3 L0.4,10.4" stroke="#c4c4c4" stroke-width="0.9" fill="none"/></svg>
<svg style="left:382.3px;top:24px" width="5" height="12" viewBox="0 0 5 12"><path d="M0.4,0.4 L3.4,5.3 L0.4,10.4" stroke="#c4c4c4" stroke-width="0.9" fill="none"/></svg>
<svg style="left:118px;top:25px" width="11" height="9" viewBox="0 0 11 9"><path d="M0,0 h3.8 l1,1.3 h4.5 v6.2 h-9.3 z" fill="#9aa7b0"/></svg>
<div class="t" style="left:130px;top:29.59px;font-size:8.4px;color:#333;font-weight:normal;font-family:'Liberation Sans', sans-serif;letter-spacing:-0.332px;">src</div>
<svg style="left:150px;top:25px" width="11" height="9" viewBox="0 0 11 9"><path d="M0,0 h3.8 l1,1.3 h4.5 v6.2 h-9.3 z" fill="#9aa7b0"/></svg>
<div class="t" style="left:162.5px;top:29.59px;font-size:8.4px;color:#333;font-weight:normal;font-family:'Liberation Sans', sans-serif;letter-spacing:-0.176px;">main</div>
<svg style="left:190px;top:25px" width="11" height="9" viewBox="0 0 11 9"><path d="M0,0 h3.8 l1,1.3 h4.5 v6.2 h-9.3 z" fill="#87cbe8"/></svg>
<div class="t" style="left:202px;top:29.59px;font-size:8.4px;color:#333;font-weight:normal;font-family:'Liberation Sans', sans-serif;letter-spacing:-0.377px;">java</div>
<svg style="left:226px;top:25px" width="11" height="9" viewBox="0 0 11 9"><path d="M0,0 h3.8 l1,1.3 h4.5 v6.2 h-9.3 z" fill="#9aa7b0"/><rect x="3.5" y="3.2" width="2.6" height="2.6" fill="#fff" opacity="0.85"/></svg>
<div class="t" style="left:238.1px;top:29.59px;font-size:8.4px;color:#333;font-weight:normal;font-family:'Liberation Sans', sans-serif;letter-spacing:-0.023px;">com</div>
<svg style="left:264px;top:25px" width="11" height="9" viewBox="0 0 11 9"><path d="M0,0 h3.8 l1,1.3 h4.5 v6.2 h-9.3 z" fill="#9aa7b0"/><rect x="3.5" y="3.2" width="2.6" height="2.6" fill="#fff" opacity="0.85"/></svg>
<div class="t" style="left:275.7px;top:29.59px;font-size:8.4px;color:#333;font-weight:normal;font-family:'Liberation Sans', sans-serif;letter-spacing:-0.221px;">example</div>
<svg style="left:316px;top:25px" width="11" height="9" viewBox="0 0 11 9"><path d="M0,0 h3.8 l1,1.3 h4.5 v6.2 h-9.3 z" fill="#9aa7b0"/><rect x="3.5" y="3.2" width="2.6" height="2.6" fill="#fff" opacity="0.85"/></svg>
<div class="t" style="left:328.7px;top:29.59px;font-size:8.4px;color:#333;font-weight:normal;font-family:'Liberation Sans', sans-serif;letter-spacing:-0.081px;">myapplication</div>
<svg style="left:389.3px;top:24.3px" width="11" height="11" viewBox="0 0 11 11"><circle cx="5" cy="5" r="4.6" fill="#7ccbe8"/><path d="M6.8,3.4 A2.2,2.2 0 1 0 5.6,7.2" stroke="#333" stroke-width="1" fill="none" opacity="0.8"/><path d="M5.5,10.5 L5.5,6 L10,6 Z" fill="#f88a2f"/><path d="M5.5,10.5 L5.5,6 L7.8,8.2 Z" fill="#e44857"/><path d="M5.5,10.5 L7.8,8.2 L10.5,10.5 Z" fill="#3aa8f0"/><path d="M5.5,6 L6.8,6 L5.5,7.5 Z" fill="#3aa8f0"/></svg>
<div class="t" style="left:401.8px;top:29.59px;font-size:8.4px;color:#000;font-weight:normal;font-family:'Liberation Sans', sans-serif;letter-spacing:-0.034px;">MainActivity</div>
<svg style="left:848px;top:22.5px" width="12" height="12" viewBox="0 0 12 12"><path d="M1.6,5 L7,1.8" stroke="#59a869" stroke-width="2"/><path d="M4.5,3.5 L10.8,10.2" stroke="#59a869" stroke-width="1.8"/></svg>
<div style="left:868.2px;top:22.2px;width:46.0px;height:12.099999999999998px;border:1px solid #c4c4c4;border-radius:2px;background:#fff;"></div>
<svg style="left:873.4px;top:25.6px" width="9.8" height="7.6" viewBox="0 0 9.8 7.6"><g transform="scale(0.800,0.880)"><path d="M0,7.3 C0,4 2.4,1.8 5.5,1.8 C8.6,1.8 11,4 11,7.3 Z" fill="#3ddc84"/><path d="M1.8,0.2 L3.3,2.6 M9.2,0.2 L7.7,2.6" stroke="#3ddc84" stroke-width="1.1"/><circle cx="3.5" cy="5" r="0.65" fill="#fff"/><circle cx="7.5" cy="5" r="0.65" fill="#fff"/></g></svg>
<svg style="left:879px;top:30px" width="6" height="6" viewBox="0 0 6 6"><circle cx="3.2" cy="3.4" r="1.7" fill="#19c832"/></svg>
<div class="t" style="left:886px;top:29.49px;font-size:8.4px;color:#000;font-weight:normal;font-family:'Liberation Sans', sans-serif;letter-spacing:-0.271px;">app</div>
<svg style="left:906.3px;top:27.5px" width="7" height="5" viewBox="0 0 7 5"><path d="M0.3,0.3 h5.3 l-2.65,3.2 z" fill="#555"/></svg>
<div style="left:921.2px;top:22.2px;width:85.79999999999995px;height:12.099999999999998px;border:1px solid #c4c4c4;border-radius:2px;background:#fff;"></div>
<svg style="left:927.5px;top:24.2px" width="11" height="12" viewBox="0 0 11 12"><rect x="1.5" y="0.8" width="4.6" height="7.6" rx="0.5" fill="#fff" stroke="#8c8c8c" stroke-width="0.8"/><circle cx="8" cy="9" r="1.7" fill="#19c832"/></svg>
<div class="t" style="left:939.8px;top:29.49px;font-size:8.4px;color:#000;font-weight:normal;font-family:'Liberation Sans', sans-serif;letter-spacing:-0.438px;">Nexus S API 29</div>
<svg style="left:997.5px;top:27.5px" width="7" height="5" viewBox="0 0 7 5"><path d="M0.3,0.3 h5.3 l-2.65,3.2 z" fill="#555"/></svg>
<svg style="left:1015px;top:23.5px" width="11" height="11" viewBox="0 0 11 11"><path d="M8.2,3.2 A3.8,3.8 0 1 0 7.5,8.5" stroke="#59a869" stroke-width="1.6" fill="none"/><path d="M6,0.5 L9.5,3.2 L6,5.5 Z" fill="#59a869"/><rect x="6.5" y="6.5" width="3.5" height="3.5" fill="#555"/></svg>
<svg style="left:1032.5px;top:23.5px" width="11" height="11" viewBox="0 0 11 11"><path d="M8.2,3.2 A3.8,3.8 0 1 0 5.5,9" stroke="#59a869" stroke-width="1.6" fill="none"/><path d="M6,0.5 L9.5,3.2 L6,5.5 Z" fill="#59a869"/><path d="M6.5,10.5 L8,6.5 L9.5,10.5 M7,9 h2" stroke="#555" stroke-width="0.8" fill="none"/></svg>
<svg style="left:1051px;top:24px" width="11" height="10" viewBox="0 0 11 10"><rect x="0.5" y="1" width="8" height="1.1" fill="#555"/><rect x="0.5" y="3.5" width="8" height="1.1" fill="#555"/><rect x="0.5" y="6" width="6" height="1.1" fill="#555"/><rect x="0.5" y="8.5" width="4" height="1.1" fill="#555"/><path d="M7.5,6.5 Q10,6.5 9.5,8.5 L7.5,9" stroke="#59a869" stroke-width="0.8" fill="none"/></svg>
<svg style="left:1068.5px;top:23px" width="11" height="12" viewBox="0 0 11 12"><ellipse cx="5.0" cy="6.5" rx="3" ry="3.8" fill="#59a869"/><circle cx="5.0" cy="2.3" r="1.6" fill="#59a869"/><path d="M1.0,4.0 l2,1.2 M9.0,4.0 l-2,1.2 M0.5,7.0 h2 M9.5,7.0 h-2 M1.0,10.0 l2,-1.2 M9.0,10.0 l-2,-1.2" stroke="#59a869" stroke-width="0.9"/><path d="M5.0,4.0 v6" stroke="#e6f2e8" stroke-width="0.6"/></svg>
<svg style="left:1086px;top:23.5px" width="11" height="11" viewBox="0 0 11 11"><path d="M1,1 h5 v8.5 h-5 z" fill="#c8c8c8"/><path d="M5,3 L9.5,6.5 L5,10 Z" fill="#c8c8c8"/></svg>
<svg style="left:1103.5px;top:24px" width="11" height="10" viewBox="0 0 11 10"><path d="M1,8 A4.5,4.5 0 0 1 10,8" stroke="#389fd6" stroke-width="1.6" fill="none"/><path d="M5.5,8 L8,3.5" stroke="#555" stroke-width="1.2"/><rect x="8.5" y="5.5" width="1.5" height="3" fill="#555"/></svg>
<svg style="left:1121px;top:23px" width="12" height="12" viewBox="0 0 12 12"><ellipse cx="5.0" cy="6.5" rx="3" ry="3.8" fill="#59a869"/><circle cx="5.0" cy="2.3" r="1.6" fill="#59a869"/><path d="M1.0,4.0 l2,1.2 M9.0,4.0 l-2,1.2 M0.5,7.0 h2 M9.5,7.0 h-2 M1.0,10.0 l2,-1.2 M9.0,10.0 l-2,-1.2" stroke="#59a869" stroke-width="0.9"/><path d="M5.0,4.0 v6" stroke="#e6f2e8" stroke-width="0.6"/><path d="M6,10.5 L10.5,6 M7.5,6 h3 v3" stroke="#555" stroke-width="1.1" fill="none"/></svg>
<div style="left:1140px;top:26px;width:7px;height:7px;background:#db5860;"></div>
<div style="left:1154.5px;top:22px;width:1px;height:14px;background:#d0d0d0;"></div>
<svg style="left:1160.5px;top:23.5px" width="12" height="11" viewBox="0 0 12 11"><path d="M0.5,1 h3.5 l1,1.3 h4.5 v6.2 h-9 z" fill="#555"/><rect x="6.5" y="6" width="2" height="2" fill="#389fd6"/><rect x="9" y="6" width="2" height="2" fill="#389fd6"/><rect x="6.5" y="8.5" width="2" height="2" fill="#389fd6"/><rect x="9" y="8.5" width="2" height="2" fill="#389fd6"/></svg>
<div style="left:1176.5px;top:22px;width:1px;height:14px;background:#d0d0d0;"></div>
<svg style="left:1183px;top:23.5px" width="11" height="11" viewBox="0 0 11 11"><rect x="0.5" y="1" width="9.5" height="8" fill="none" stroke="#555" stroke-width="0.9"/><rect x="0.5" y="1" width="9.5" height="2" fill="#555"/><path d="M4,4.5 L6.5,6 L4,7.5 Z" fill="#59a869"/></svg>
<svg style="left:1200.5px;top:23.5px" width="12" height="11" viewBox="0 0 12 11"><path d="M0.5,8.5 C0.8,5 3,3.5 5.5,3.5 C7,3.5 7.6,3.6 8,2.6 C8.4,1.8 9.2,1.8 9.7,2.4 C9.2,2.5 9,2.8 8.9,3.3 C8.7,4.5 9.2,5.2 9,6.5 L8.8,8.5 L7.6,8.5 L7.5,6.8 C6.5,7 5,7 4,6.8 L3.9,8.5 L2.7,8.5 L2.5,7 L2,8.5 Z" fill="#555"/><path d="M10.5,5.5 L7.5,9.5 M7.2,7 v2.8 h2.8" stroke="#389fd6" stroke-width="1.2" fill="none"/></svg>
<svg style="left:1219.5px;top:23.5px" width="11" height="12" viewBox="0 0 11 12"><rect x="1" y="0.5" width="5.5" height="9" rx="0.8" fill="none" stroke="#555" stroke-width="0.9"/><path d="M5.5,10.5 A2.5,2.5 0 0 1 10.5,10.5 Z" fill="#3ddc84"/><rect x="5" y="9" width="6" height="2" fill="#3ddc84"/></svg>
<svg style="left:1236px;top:23.5px" width="11" height="12" viewBox="0 0 11 12"><path d="M1,3 L4,1 L7,3 L7,6.5 L4,8.5 L1,6.5 Z" fill="#555"/><path d="M4,4 v4.5 M1,3 L4,4.5 L7,3" stroke="#f2f2f2" stroke-width="0.7" fill="none"/><path d="M8,4 v6 M6.3,8.3 L8,10.3 L9.7,8.3" stroke="#389fd6" stroke-width="1.2" fill="none"/></svg>
<div style="left:1252px;top:22px;width:1px;height:14px;background:#d0d0d0;"></div>
<svg style="left:1258.5px;top:24px" width="11" height="11" viewBox="0 0 11 11"><circle cx="4.2" cy="4.2" r="3.2" stroke="#555" stroke-width="1.1" fill="none"/><path d="M6.6,6.6 L9.8,9.8" stroke="#555" stroke-width="1.3"/></svg>
<svg style="left:1276px;top:24px" width="11" height="11" viewBox="0 0 11 11"><rect x="0" y="0" width="10.5" height="10.5" fill="#d4d4d4"/><circle cx="5.2" cy="3.6" r="2" fill="#fff"/><path d="M1.5,10.5 C1.5,7 9,7 9,10.5 Z" fill="#fff"/></svg>
<div style="left:1208px;top:9px;width:7px;height:1px;background:#8a8a8a;"></div>
<div style="left:1240px;top:6px;width:5.5px;height:5.5px;border:1px solid #222;"></div>
<svg style="left:1271.5px;top:5.8px" width="8" height="8" viewBox="0 0 8 8"><path d="M0.3,0.3 L6.9,6.9 M6.9,0.3 L0.3,6.9" stroke="#333" stroke-width="0.9"/></svg>
<svg style="left:6px;top:5.8px" width="12" height="8.5" viewBox="0 0 12 8.5"><g transform="scale(1.000,1.000)"><path d="M0,7.3 C0,4 2.4,1.8 5.5,1.8 C8.6,1.8 11,4 11,7.3 Z" fill="#3ddc84"/><path d="M1.8,0.2 L3.3,2.6 M9.2,0.2 L7.7,2.6" stroke="#3ddc84" stroke-width="1.1"/><circle cx="3.5" cy="5" r="0.65" fill="#fff"/><circle cx="7.5" cy="5" r="0.65" fill="#fff"/></g></svg>
<svg style="left:1267.5px;top:58px" width="9" height="8" viewBox="0 0 9 8"><path d="M1,4 L3.5,6.5 L8,1.5" stroke="#59a869" stroke-width="1.5" fill="none"/></svg>
<svg style="left:337px;top:43px" width="11" height="11" viewBox="0 0 11 11"><rect x="5" y="0" width="4" height="4.6" fill="#a9b3bb"/><rect x="3.2" y="1.6" width="1.6" height="1.1" fill="#a9b3bb"/><rect x="2.2" y="3.5" width="6.8" height="1.1" fill="#a9b3bb"/><rect x="0" y="5.2" width="10.5" height="5" fill="#f58d58"/><path d="M4,6.3 l-1.6,1.5 l1.6,1.5 M6.2,6.3 l1.6,1.5 l-1.6,1.5" stroke="#8a3a18" stroke-width="0.75" fill="none" opacity="0.85"/></svg>
<div class="t" style="left:350px;top:48.39px;font-size:8.4px;color:#000;font-weight:normal;font-family:'Liberation Sans', sans-serif;letter-spacing:-0.067px;">activity_main.xml</div>
<svg style="left:417px;top:45.5px" width="7" height="7" viewBox="0 0 7 7"><path d="M0.8,0.8 L5.5,5.5 M5.5,0.8 L0.8,5.5" stroke="#b8b8b8" stroke-width="0.8"/></svg>
<svg style="left:433.5px;top:43.3px" width="11" height="11" viewBox="0 0 11 11"><circle cx="5" cy="5" r="4.6" fill="#7ccbe8"/><path d="M6.8,3.4 A2.2,2.2 0 1 0 5.6,7.2" stroke="#333" stroke-width="1" fill="none" opacity="0.8"/><path d="M5.5,10.5 L5.5,6 L10,6 Z" fill="#f88a2f"/><path d="M5.5,10.5 L5.5,6 L7.8,8.2 Z" fill="#e44857"/><path d="M5.5,10.5 L7.8,8.2 L10.5,10.5 Z" fill="#3aa8f0"/><path d="M5.5,6 L6.8,6 L5.5,7.5 Z" fill="#3aa8f0"/></svg>
<div class="t" style="left:446.9px;top:48.39px;font-size:8.4px;color:#000;font-weight:normal;font-family:'Liberation Sans', sans-serif;letter-spacing:0.070px;">MainActivity.kt</div>
<svg style="left:505.5px;top:45.5px" width="7" height="7" viewBox="0 0 7 7"><path d="M0.8,0.8 L5.5,5.5 M5.5,0.8 L0.8,5.5" stroke="#b8b8b8" stroke-width="0.8"/></svg>
<svg style="left:348px;top:116.5px" width="11" height="11" viewBox="0 0 11 11"><rect x="5" y="0" width="4" height="4.6" fill="#a9b3bb"/><rect x="3.2" y="1.6" width="1.6" height="1.1" fill="#a9b3bb"/><rect x="2.2" y="3.5" width="6.8" height="1.1" fill="#a9b3bb"/><rect x="0" y="5.2" width="10.5" height="5" fill="#f58d58"/><path d="M4,6.3 l-1.6,1.5 l1.6,1.5 M6.2,6.3 l1.6,1.5 l-1.6,1.5" stroke="#8a3a18" stroke-width="0.75" fill="none" opacity="0.85"/></svg>
<svg style="left:350px;top:144.5px" width="9" height="9" viewBox="0 0 9 9"><circle cx="3.5" cy="5" r="2.5" fill="#3d8fd9"/><circle cx="3.5" cy="5" r="1" fill="#fff"/><path d="M6.5,4 v-3.5 M5,2 l1.5,-1.5 l1.5,1.5" stroke="#e05555" stroke-width="0.9" fill="none"/></svg>
<svg style="left:366px;top:90.1px" width="7" height="7" viewBox="0 0 7 7"><rect x="0.5" y="0.5" width="5.5" height="5.5" fill="#fff" stroke="#b8b8b8" stroke-width="0.8"/><path d="M1.8,3.25 h3" stroke="#999" stroke-width="0.8"/></svg>
<svg style="left:366px;top:118.4px" width="7" height="8" viewBox="0 0 7 8"><path d="M0.5,0.5 h5.5 v4 l-2.75,2.5 l-2.75,-2.5 z" fill="#fff" stroke="#b8b8b8" stroke-width="0.8"/><path d="M1.8,3 h3" stroke="#999" stroke-width="0.8"/></svg>
<svg style="left:366px;top:146.7px" width="7" height="8" viewBox="0 0 7 8"><path d="M0.5,0.5 h5.5 v4 l-2.75,2.5 l-2.75,-2.5 z" fill="#fff" stroke="#b8b8b8" stroke-width="0.8"/><path d="M1.8,3 h3" stroke="#999" stroke-width="0.8"/></svg>
<svg style="left:366px;top:188.65px" width="7" height="8" viewBox="0 0 7 8"><path d="M0.5,7 h5.5 v-4 l-2.75,-2.5 l-2.75,2.5 z" fill="#fff" stroke="#b8b8b8" stroke-width="0.8"/><path d="M1.8,4.2 h3" stroke="#999" stroke-width="0.8"/></svg>
<svg style="left:366px;top:202.8px" width="7" height="8" viewBox="0 0 7 8"><path d="M0.5,7 h5.5 v-4 l-2.75,-2.5 l-2.75,2.5 z" fill="#fff" stroke="#b8b8b8" stroke-width="0.8"/><path d="M1.8,4.2 h3" stroke="#999" stroke-width="0.8"/></svg>
<div style="left:397px;top:157px;width:0.8px;height:29px;background:#e2e2e2;"></div>
<div class="t" style="left:19.4px;top:475.89px;font-size:8.4px;color:#000;font-weight:normal;font-family:'Liberation Sans', sans-serif;letter-spacing:-0.053px;">Logcat</div>
<svg style="left:1245px;top:470.5px" width="11" height="11" viewBox="0 0 11 11"><polygon points="8.03,4.34 9.24,4.30 9.24,5.70 8.03,5.66 7.60,6.68 8.49,7.51 7.51,8.49 6.68,7.60 5.66,8.03 5.70,9.24 4.30,9.24 4.34,8.03 3.32,7.60 2.49,8.49 1.51,7.51 2.40,6.68 1.97,5.66 0.76,5.70 0.76,4.30 1.97,4.34 2.40,3.32 1.51,2.49 2.49,1.51 3.32,2.40 4.34,1.97 4.30,0.76 5.70,0.76 5.66,1.97 6.68,2.40 7.51,1.51 8.49,2.49 7.60,3.32" fill="#6e6e6e"/><circle cx="5" cy="5" r="3.16" fill="#6e6e6e"/><circle cx="5" cy="5" r="1.42" fill="#dfe4ec"/></svg>
<div style="left:1263.5px;top:475.2px;width:8px;height:1.2px;background:#6e6e6e;"></div>
<div style="left:20.8px;top:490.7px;width:144.6px;height:13.6px;border:2px solid #8fb8e8;border-radius:2.5px;background:#fff;"></div>
<svg style="left:26.4px;top:496.3px" width="10" height="8" viewBox="0 0 10 8"><rect x="0.5" y="0.5" width="8.5" height="6.5" fill="#fff" stroke="#999" stroke-width="0.8"/><rect x="1.5" y="1.5" width="2.5" height="4.5" fill="#6e9fd0"/><rect x="5" y="1.5" width="3" height="4.5" fill="#999"/></svg>
<div class="t" style="left:38.8px;top:499.79px;font-size:8.4px;color:#000;font-weight:normal;font-family:'Liberation Sans', sans-serif;letter-spacing:-0.489px;">Emulator Nexus_S_API_29</div>
<div class="t" style="left:132.3px;top:499.79px;font-size:8.4px;color:#8c8c8c;font-weight:normal;font-family:'Liberation Sans', sans-serif;letter-spacing:-0.188px;">Andrc</div>
<svg style="left:158px;top:497.6px" width="7" height="5" viewBox="0 0 7 5"><path d="M0.3,0.3 h5.8 l-2.9,3.6 z" fill="#555"/></svg>
<div style="left:177.4px;top:491px;width:144.20000000000002px;height:15px;border:1px solid #c4c4c4;border-radius:2px;background:#fff;"></div>
<div class="t" style="left:181.8px;top:499.79px;font-size:8.4px;color:#000;font-weight:normal;font-family:'Liberation Sans', sans-serif;letter-spacing:-0.324px;">com.example.</div>
<div class="t" style="left:230.5px;top:499.79px;font-size:8.4px;color:#000;font-weight:bold;font-family:'Liberation Sans', sans-serif;letter-spacing:-0.167px;">myapplication</div>
<div class="t" style="left:286.9px;top:499.79px;font-size:8.4px;color:#8c8c8c;font-weight:normal;font-family:'Liberation Sans', sans-serif;letter-spacing:-0.463px;">(3718)</div>
<svg style="left:313px;top:497.6px" width="7" height="5" viewBox="0 0 7 5"><path d="M0.3,0.3 h5.8 l-2.9,3.6 z" fill="#555"/></svg>
<div style="left:336.4px;top:491px;width:56.400000000000034px;height:15px;border:1px solid #c4c4c4;border-radius:2px;background:#fff;"></div>
<div class="t" style="left:340.7px;top:499.79px;font-size:8.4px;color:#000;font-weight:normal;font-family:'Liberation Sans', sans-serif;letter-spacing:-0.417px;">Verbose</div>
<svg style="left:384px;top:497.6px" width="7" height="5" viewBox="0 0 7 5"><path d="M0.3,0.3 h5.8 l-2.9,3.6 z" fill="#555"/></svg>
<div style="left:403.1px;top:491px;width:662.4999999999999px;height:15px;border:1px solid #c4c4c4;border-radius:2px;background:#fff;"></div>
<svg style="left:406px;top:494.5px" width="13" height="10" viewBox="0 0 13 10"><circle cx="4.5" cy="4.3" r="3.2" stroke="#8c8c8c" stroke-width="0.9" fill="none"/><path d="M6.8,6.6 L9,8.8" stroke="#8c8c8c" stroke-width="1"/><path d="M9.5,4 h3 l-1.5,1.8 z" fill="#8c8c8c"/></svg>
<div style="left:1076px;top:494px;width:9px;height:9px;background:#4a86c7;border-radius:1.5px;"></div>
<svg style="left:1076px;top:494px" width="9" height="9" viewBox="0 0 9 9"><path d="M2,4.5 L3.8,6.5 L7.2,2.3" stroke="#fff" stroke-width="1.3" fill="none"/></svg>
<div class="t" style="left:1089.6px;top:499.79px;font-size:8.4px;color:#000;font-weight:normal;font-family:'Liberation Sans', sans-serif;letter-spacing:-0.716px;">Regex</div>
<div style="left:1123px;top:491px;width:145.5999999999999px;height:15px;border:1px solid #c4c4c4;border-radius:2px;background:#fff;"></div>
<div class="t" style="left:1127.5px;top:499.79px;font-size:8.4px;color:#000;font-weight:normal;font-family:'Liberation Sans', sans-serif;letter-spacing:-0.136px;">Show only selected application</div>
<svg style="left:1259.3px;top:497.6px" width="7" height="5" viewBox="0 0 7 5"><path d="M0.3,0.3 h5.8 l-2.9,3.6 z" fill="#555"/></svg>
<div style="left:16px;top:514px;width:47px;height:17px;background:#e8e8e8;"></div>
<div style="left:16px;top:531px;width:48px;height:2px;background:#a9b4c5;"></div>
<svg style="left:24.5px;top:520px" width="9" height="7" viewBox="0 0 9 7"><rect x="0.5" y="0.5" width="7" height="1" fill="#555"/><rect x="0.5" y="2.8" width="5" height="1" fill="#555"/><rect x="0.5" y="5.1" width="7" height="1" fill="#555"/></svg>
<div class="t" style="left:36.3px;top:522.99px;font-size:8.4px;color:#000;font-weight:normal;font-family:'Liberation Sans', sans-serif;letter-spacing:-0.236px;">logcat</div>
<svg style="left:1262.5px;top:518px" width="11" height="11" viewBox="0 0 11 11"><rect x="0.5" y="0.5" width="8.5" height="3.5" fill="#555"/><rect x="0.5" y="4.8" width="8.5" height="2" fill="#555"/><path d="M7,9 h3 l-1.5,1.5 z" fill="#555"/></svg>
<svg style="left:22px;top:537.5px" width="8" height="10" viewBox="0 0 8 10"><rect x="0.5" y="1" width="7" height="1.2" fill="#555"/><rect x="2.5" y="0" width="3" height="1.2" fill="#555"/><path d="M1.2,2.8 h5.6 l-0.5,6 h-4.6 z" fill="#555"/></svg>
<div style="left:18px;top:553px;width:15px;height:15px;background:#d8d8d8;border-radius:2px;"></div>
<svg style="left:21.5px;top:555.5px" width="10" height="10" viewBox="0 0 10 10"><rect x="0.5" y="2" width="2.5" height="1" fill="#555"/><rect x="0.5" y="5" width="2.5" height="1" fill="#555"/><rect x="0.5" y="8" width="8.5" height="1.1" fill="#555"/><path d="M6,0.5 v6 M4,4.5 l2,2 l2,-2" stroke="#555" stroke-width="1" fill="none"/></svg>
<svg style="left:22px;top:571px" width="8" height="12" viewBox="0 0 8 12"><path d="M3.8,1 v10 M0.8,4 l3,-3 l3,3" stroke="#b8b8b8" stroke-width="1" fill="none"/></svg>
<svg style="left:22px;top:591px" width="8" height="11" viewBox="0 0 8 11"><path d="M3.8,0 v9.5 M0.8,6.5 l3,3 l3,-3" stroke="#b8b8b8" stroke-width="1" fill="none"/></svg>
<svg style="left:21.5px;top:608px" width="10" height="11" viewBox="0 0 10 11"><rect x="0.5" y="0.8" width="8" height="1.1" fill="#555"/><path d="M0.5,4.5 h6.5 a2,2 0 0 1 0,4 h-3" stroke="#555" stroke-width="1.1" fill="none"/><path d="M5,7 l-1.8,1.5 l1.8,1.5" stroke="#555" stroke-width="0.9" fill="none"/><rect x="0.5" y="7.8" width="2" height="1.1" fill="#555"/></svg>
<svg style="left:21px;top:626.5px" width="11" height="10" viewBox="0 0 11 10"><rect x="2.5" y="0.5" width="5" height="2.5" fill="#555"/><rect x="0.5" y="3" width="9.5" height="4" fill="#555"/><rect x="2.5" y="5.5" width="5.5" height="3.5" fill="#fff" stroke="#555" stroke-width="0.9"/></svg>
<div style="left:19.5px;top:642px;width:13px;height:0.8px;background:#dcdcdc;"></div>
<svg style="left:23.5px;top:661px" width="7" height="6" viewBox="0 0 7 6"><path d="M0.5,0.5 l2,2 l-2,2 M3.5,0.5 l2,2 l-2,2" stroke="#8c8c8c" stroke-width="0.7" fill="none"/></svg>
<div class="t" style="left:43px;top:539.27px;font-size:9.6px;color:#333333;font-weight:normal;font-family:'Liberation Mono', monospace;letter-spacing:-0.341px;">2020-04-19 11:16:55.274 3718-3739/com.example.myapplication D/EGL_emulation: eglCreateContext: 0x7345fc0107e0: maj 3 min 1 rcv 4</div>
<div class="t" style="left:43px;top:553.52px;font-size:9.6px;color:#333333;font-weight:normal;font-family:'Liberation Mono', monospace;letter-spacing:-0.341px;">2020-04-19 11:16:55.294 3718-3739/com.example.myapplication D/EGL_emulation: eglMakeCurrent: 0x7345fc0107e0: ver 3 1 (tinfo 0x73468c13a580)</div>
<div class="t" style="left:43px;top:567.77px;font-size:9.6px;color:#9a1414;font-weight:normal;font-family:'Liberation Mono', monospace;letter-spacing:-0.341px;">2020-04-19 11:16:55.295 3718-3739/com.example.myapplication E/eglCodecCommon: glUtilsParamSize: unknow param 0x000082da</div>
<div class="t" style="left:43px;top:582.02px;font-size:9.6px;color:#9a1414;font-weight:normal;font-family:'Liberation Mono', monospace;letter-spacing:-0.341px;">2020-04-19 11:16:55.296 3718-3739/com.example.myapplication E/eglCodecCommon: glUtilsParamSize: unknow param 0x000082da</div>
<div class="t" style="left:43px;top:596.27px;font-size:9.6px;color:#2a2a96;font-weight:normal;font-family:'Liberation Mono', monospace;letter-spacing:-0.341px;">2020-04-19 11:16:55.307 3718-3739/com.example.myapplication W/Gralloc3: mapper 3.x is not supported</div>
<div class="t" style="left:43px;top:610.52px;font-size:9.6px;color:#333333;font-weight:normal;font-family:'Liberation Mono', monospace;letter-spacing:-0.341px;">2020-04-19 11:16:55.317 3718-3739/com.example.myapplication D/eglCodecCommon: allocate: Ask for block of size 0x1000</div>
<div class="t" style="left:43px;top:624.77px;font-size:9.6px;color:#1a1a1a;font-weight:normal;font-family:'Liberation Mono', monospace;letter-spacing:-0.342px;">2020-04-19 11:16:55.318 3718-3739/com.example.myapplication D/eglCodecCommon: allocate: ioctl allocate returned offset 0x3ffe79000 size 0x2000</div>
<div class="t" style="left:43px;top:639.02px;font-size:9.6px;color:#333333;font-weight:normal;font-family:'Liberation Mono', monospace;letter-spacing:-0.341px;">2020-04-19 11:16:55.325 3718-3739/com.example.myapplication D/EGL_emulation: eglMakeCurrent: 0x7345fc0107e0: ver 3 1 (tinfo 0x73468c13a580)</div>
<div class="t" style="left:43px;top:653.27px;font-size:9.6px;color:#333333;font-weight:normal;font-family:'Liberation Mono', monospace;letter-spacing:-0.342px;">2020-04-19 11:16:55.326 3718-3739/com.example.myapplication D/eglCodecCommon: setVertexArrayObject: set vao to 0 (0) 1 0</div>
<div style="left:43px;top:663.2px;width:865px;height:7px;background:#e3e3e3;"></div>
<svg style="left:22.5px;top:675px" width="9" height="9" viewBox="0 0 9 9"><path d="M0.5,0.3 L6,3.4 L0.5,6.5 Z" fill="#555"/><circle cx="6.8" cy="6.5" r="1.6" fill="#3ddc84"/></svg>
<div class="t" style="left:32.9px;top:679.29px;font-size:8.4px;color:#000;font-weight:normal;font-family:'Liberation Sans', sans-serif;letter-spacing:-0.325px;">4: Run</div>
<div style="left:33.3px;top:683.4px;width:4px;height:0.7px;background:#000;"></div>
<svg style="left:70px;top:675px" width="10" height="8" viewBox="0 0 10 8"><rect x="0.5" y="0.5" width="1.5" height="1.2" fill="#555"/><rect x="3" y="0.5" width="6" height="1.2" fill="#555"/><rect x="0.5" y="3" width="1.5" height="1.2" fill="#555"/><rect x="3" y="3" width="6" height="1.2" fill="#555"/><rect x="0.5" y="5.5" width="1.5" height="1.2" fill="#555"/><rect x="3" y="5.5" width="6" height="1.2" fill="#555"/></svg>
<div class="t" style="left:80.5px;top:679.29px;font-size:8.4px;color:#000;font-weight:normal;font-family:'Liberation Sans', sans-serif;letter-spacing:-0.653px;">TODO</div>
<svg style="left:115px;top:675px" width="10" height="8" viewBox="0 0 10 8"><path d="M1,7.5 A3.8,3.8 0 0 1 8.6,7.5" stroke="#555" stroke-width="1.2" fill="none"/><path d="M4.8,7.2 L6.6,4.6" stroke="#555" stroke-width="1.1"/></svg>
<div class="t" style="left:126px;top:679.29px;font-size:8.4px;color:#000;font-weight:normal;font-family:'Liberation Sans', sans-serif;letter-spacing:-0.113px;">Profiler</div>
<div style="left:159.4px;top:671px;width:55.6px;height:14px;background:#cbcbcb;"></div>
<svg style="left:167px;top:675.5px" width="9" height="8" viewBox="0 0 9 8"><rect x="0.5" y="0.5" width="7" height="1.1" fill="#555"/><rect x="0.5" y="3" width="5" height="1.1" fill="#555"/><rect x="0.5" y="5.5" width="7" height="1.1" fill="#555"/></svg>
<div class="t" style="left:177px;top:679.29px;font-size:8.4px;color:#000;font-weight:normal;font-family:'Liberation Sans', sans-serif;letter-spacing:-0.284px;">6: Logcat</div>
<div style="left:177.3px;top:683.4px;width:4px;height:0.7px;background:#000;"></div>
<svg style="left:221.5px;top:673.5px" width="11" height="11" viewBox="0 0 11 11"><path d="M0.8,4.2 L5.2,0.8" stroke="#555" stroke-width="1.9"/><path d="M3.6,3 L9.6,9.4" stroke="#555" stroke-width="1.6"/></svg>
<div class="t" style="left:233.7px;top:679.29px;font-size:8.4px;color:#000;font-weight:normal;font-family:'Liberation Sans', sans-serif;letter-spacing:-0.316px;">Build</div>
<svg style="left:265.5px;top:674.5px" width="10" height="10" viewBox="0 0 10 10"><rect x="0.5" y="0.5" width="8" height="8" fill="none" stroke="#555" stroke-width="1"/><rect x="0.5" y="0.5" width="8" height="2" fill="#555"/><path d="M2,3.8 l2,1.5 l-2,1.5" stroke="#555" stroke-width="0.9" fill="none"/><rect x="4.5" y="6.2" width="2.5" height="0.9" fill="#555"/></svg>
<div class="t" style="left:276.5px;top:679.29px;font-size:8.4px;color:#000;font-weight:normal;font-family:'Liberation Sans', sans-serif;letter-spacing:-0.218px;">Terminal</div>
<svg style="left:1223.5px;top:674.5px" width="10" height="9" viewBox="0 0 10 9"><circle cx="4.7" cy="4.2" r="4.1" fill="#eba21b"/></svg>
<div class="t" style="left:1226.2px;top:678.64px;font-size:6.8px;color:#3a2a00;font-weight:normal;font-family:'Liberation Sans', sans-serif;">4</div>
<div class="t" style="left:1236px;top:678.59px;font-size:8.4px;color:#000;font-weight:normal;font-family:'Liberation Sans', sans-serif;letter-spacing:-0.514px;">Event Log</div>
<svg style="left:5px;top:688px" width="10" height="9" viewBox="0 0 10 9"><rect x="0.8" y="0.5" width="7" height="6.5" fill="#fff" stroke="#6e6e6e" stroke-width="0.8"/><rect x="0.5" y="7.5" width="8" height="0.8" fill="#6e6e6e"/></svg>
<div class="t" style="left:19.3px;top:691.69px;font-size:8.4px;color:#000;font-weight:normal;font-family:'Liberation Sans', sans-serif;letter-spacing:-0.211px;">Install successfully finished in 2 s 465 ms. (11 minutes ago)</div>
<div class="t" style="left:1143.2px;top:692.09px;font-size:8.4px;color:#000;font-weight:normal;font-family:'Liberation Sans', sans-serif;letter-spacing:-0.637px;">13:1</div>
<div class="t" style="left:1165.7px;top:692.09px;font-size:8.4px;color:#000;font-weight:normal;font-family:'Liberation Sans', sans-serif;letter-spacing:-1.084px;">CRLF</div>
<div class="t" style="left:1192px;top:692.09px;font-size:8.4px;color:#000;font-weight:normal;font-family:'Liberation Sans', sans-serif;letter-spacing:-0.599px;">UTF-8</div>
<div class="t" style="left:1221px;top:692.09px;font-size:8.4px;color:#000;font-weight:normal;font-family:'Liberation Sans', sans-serif;letter-spacing:-0.527px;">4 spaces</div>
<svg style="left:1257.5px;top:687px" width="10" height="10" viewBox="0 0 10 10"><path d="M1.5,4.5 v-1.8 a1.8,1.8 0 0 1 3.6,0" stroke="#555" stroke-width="0.9" fill="none"/><rect x="3.5" y="4.5" width="5" height="4.2" fill="#555"/></svg>
<svg style="left:1274.5px;top:687px" width="10" height="10" viewBox="0 0 10 10"><rect x="2" y="0.8" width="5" height="3" rx="1" fill="none" stroke="#777" stroke-width="0.8"/><rect x="0.5" y="3.8" width="8" height="1" fill="#777"/><rect x="1.5" y="5" width="6" height="3.5" fill="none" stroke="#777" stroke-width="0.8"/><rect x="0.5" y="8.5" width="8" height="1" fill="#777"/></svg>
</body></html>
